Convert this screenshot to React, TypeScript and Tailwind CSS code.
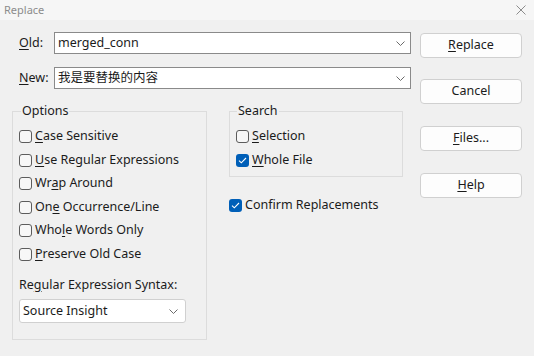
import React from 'react';

const Chevron = () => (
  <svg width="9" height="5" viewBox="0 0 9 5" className="shrink-0">
    <path d="M0.5 0.5 L4.5 4.5 L8.5 0.5" fill="none" stroke="#6b6b6b" strokeWidth="1" />
  </svg>
);

function Check({ checked }: { checked?: boolean }) {
  if (checked) {
    return (
      <span className="flex h-[13px] w-[13px] shrink-0 items-center justify-center rounded-[3px] bg-[#005fb8]">
        <svg width="9" height="7" viewBox="0 0 9 7">
          <path d="M1 3.6 L3.3 5.8 L8 1" fill="none" stroke="#ffffff" strokeWidth="1.1" />
        </svg>
      </span>
    );
  }
  return <span className="h-[13px] w-[13px] shrink-0 rounded-[3px] border border-[#5c5c5c] bg-[#f7f7f7]" />;
}

function Row({ checked, pre, u, post }: { checked?: boolean; pre: string; u: string; post: string }) {
  return (
    <div className="flex h-[23.5px] items-center">
      <Check checked={checked} />
      <span className="ml-[3px] whitespace-pre">
        {pre}
        <span className="underline underline-offset-2">{u}</span>
        {post}
      </span>
    </div>
  );
}

function Button({ pre, u, post }: { pre: string; u?: string; post?: string }) {
  return (
    <button className="flex h-[25px] w-[102px] items-center justify-center rounded-[4px] border border-[#d0d0d0] bg-[#fdfdfd]">
      {pre}
      {u && <span className="underline underline-offset-2">{u}</span>}
      {post}
    </button>
  );
}

function ComboInput({ value }: { value: string }) {
  return (
    <div className="flex h-[22px] flex-1 items-center border border-[#8a8a8a] bg-white pl-[3px] pr-[5px]">
      <span className="flex-1">{value}</span>
      <Chevron />
    </div>
  );
}

export default function App() {
  return (
    <div
      className="h-[356px] w-[534px] overflow-hidden bg-[#f0f0f0] text-[12.5px] text-[#1b1b1b]"
      style={{ fontFamily: '"Noto Sans", "Noto Sans CJK SC", sans-serif' }}
    >
      <div className="flex h-[20px] items-center justify-between bg-[#f6f6f6] pl-[4px] pr-[8px]">
        <span className="text-[11px] text-[#8c8c8c]">Replace</span>
        <svg width="10" height="10" viewBox="0 0 10 10">
          <path d="M0.5 0.5 L9.5 9.5 M9.5 0.5 L0.5 9.5" stroke="#8c8c8c" strokeWidth="1" />
        </svg>
      </div>

      <div className="flex pl-[12px] pt-[12px]">
        <div className="flex w-[399px] flex-col">
          <div className="flex items-center">
            <span className="ml-[7px] w-[35px]">
              <span className="underline underline-offset-2">O</span>ld:
            </span>
            <ComboInput value="merged_conn" />
          </div>
          <div className="mt-[13px] flex items-center">
            <span className="ml-[7px] w-[35px]">
              <span className="underline underline-offset-2">N</span>ew:
            </span>
            <ComboInput value="我是要替换的内容" />
          </div>

          <div className="mt-[22px] flex gap-[22px]">
            <div className="relative h-[229px] w-[195px] border border-[#dcdcdc] pl-[6px] pt-[13px]">
              <span className="absolute -top-[9px] left-[8px] bg-[#f0f0f0] px-px leading-[16px]">Options</span>
              <Row pre="" u="C" post="ase Sensitive" />
              <Row pre="" u="U" post="se Regular Expressions" />
              <Row pre="Wr" u="a" post="p Around" />
              <Row pre="On" u="e" post=" Occurrence/Line" />
              <Row pre="Who" u="l" post="e Words Only" />
              <Row pre="" u="P" post="reserve Old Case" />
              <div className="mt-[11px] leading-[16px]">
                Re<span className="underline underline-offset-2">g</span>ular Expression Syntax:
              </div>
              <div className="mt-[6px] flex h-[24px] w-[167px] items-center rounded-[3px] border border-[#d0d0d0] bg-white pl-[3px] pr-[7px]">
                <span className="flex-1">Source Insight</span>
                <Chevron />
              </div>
            </div>

            <div className="flex flex-col">
              <div className="relative h-[66px] w-[174px] border border-[#dcdcdc] pl-[6px] pt-[13px]">
                <span className="absolute -top-[9px] left-[7px] bg-[#f0f0f0] px-px leading-[16px]">Search</span>
                <Row pre="" u="S" post="election" />
                <Row checked pre="" u="W" post="hole File" />
              </div>
              <div className="mt-[17px]">
                <Row checked pre="Conf" u="i" post="rm Replacements" />
              </div>
            </div>
          </div>
        </div>

        <div className="ml-[9px] flex flex-col pt-[1px]">
          <Button pre="" u="R" post="eplace" />
          <div className="mt-[21px]">
            <Button pre="Cancel" />
          </div>
          <div className="mt-[22px]">
            <Button pre="" u="F" post="iles..." />
          </div>
          <div className="mt-[22px]">
            <Button pre="" u="H" post="elp" />
          </div>
        </div>
      </div>
    </div>
  );
}
